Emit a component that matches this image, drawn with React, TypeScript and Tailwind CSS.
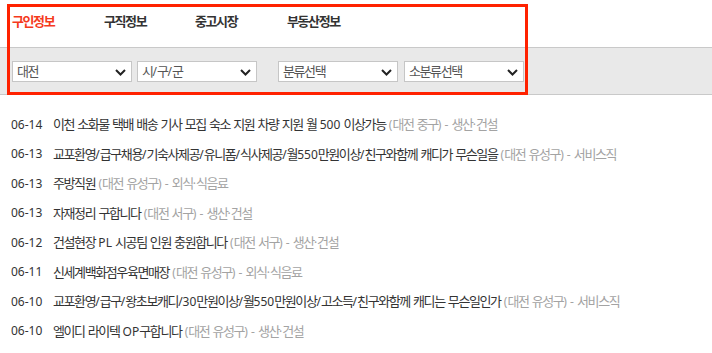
import React from "react";

const navItems = [
  { label: "구인정보", active: true, w: "w-[92px]" },
  { label: "구직정보", active: false, w: "w-[91px]" },
  { label: "중고시장", active: false, w: "w-[92px]" },
  { label: "부동산정보", active: false, w: "w-auto" },
];

const jobs = [
  { date: "06-14", title: "이천 소화물 택배 배송 기사 모집 숙소 지원 차량 지원 월 500 이상가능", area: "대전 중구", cat: "생산·건설" },
  { date: "06-13", title: "교포환영/급구채용/기숙사제공/유니폼/식사제공/월550만원이상/친구와함께 캐디가 무슨일을", area: "대전 유성구", cat: "서비스직" },
  { date: "06-13", title: "주방직원", area: "대전 유성구", cat: "외식·식음료" },
  { date: "06-13", title: "자재정리 구합니다", area: "대전 서구", cat: "생산·건설" },
  { date: "06-12", title: "건설현장 PL 시공팀 인원 충원합니다", area: "대전 서구", cat: "생산·건설" },
  { date: "06-11", title: "신세계백화점우육면매장", area: "대전 유성구", cat: "외식·식음료" },
  { date: "06-10", title: "교포환영/급구/왕초보캐디/30만원이상/월550만원이상/고소득/친구와함께 캐디는 무슨일인가", area: "대전 유성구", cat: "서비스직" },
  { date: "06-10", title: "엘이디 라이텍 OP구합니다", area: "대전 유성구", cat: "생산·건설" },
];

// Hangul runs: slightly larger face with tighter tracking, closer to the original's Korean font
function Tight({ text }: { text: string }) {
  const parts = text.split(/([\uAC00-\uD7A3]+)/);
  return (
    <>
      {parts.map((p, i) =>
        /[\uAC00-\uD7A3]/.test(p) ? (
          <span key={i} className="text-[13px] tracking-[-1.4px]">
            {p}
          </span>
        ) : (
          <span key={i}>{p}</span>
        )
      )}
    </>
  );
}

function Select({ label, className = "" }: { label: string; className?: string }) {
  return (
    <div
      className={`flex h-[21px] w-[120px] items-center justify-between border border-[#c6c6c6] bg-white pl-[4px] pr-[5px] text-[12px] text-[#555] ${className}`}
    >
      <span className="leading-none">
        <Tight text={label} />
      </span>
      <svg width="11" height="7" viewBox="0 0 11 7" className="mt-[1px]">
        <path d="M1 1 L5.5 5.5 L10 1" fill="none" stroke="#222" strokeWidth="2" />
      </svg>
    </div>
  );
}

export default function App() {
  return (
    <div className="relative min-h-[353px] w-[712px] bg-white font-['Noto_Sans','Noto_Sans_CJK_KR',sans-serif] text-[#333]">
      {/* top tabs */}
      <div className="flex h-[47px] items-center pl-[12px] pb-[4px] text-[12px] font-bold leading-none">
        {navItems.map((n) => (
          <div key={n.label} className={`${n.w} ${n.active ? "text-[#f53a1c]" : "text-[#333]"}`}>
            <Tight text={n.label} />
          </div>
        ))}
      </div>

      {/* filter bar */}
      <div className="flex h-[48px] items-center border-y border-[#c9c9c9] bg-[#e9e9e9] pl-[12px] pt-[1px]">
        <Select label="대전" />
        <Select label="시/구/군" className="ml-[5px] w-[119px]" />
        <Select label="분류선택" className="ml-[21px] w-[119px]" />
        <Select label="소분류선택" className="ml-[6px] w-[119px]" />
      </div>

      {/* job list */}
      <ul className="pt-[15px] text-[12px]">
        {jobs.map((j, i) => (
          <li key={i} className="flex h-[29.5px] items-center pl-[11px] whitespace-nowrap leading-none">
            <span className="w-[42px] shrink-0">{j.date}</span>
            <span>
              <Tight text={j.title} />
              <span className="text-[#a3a3a3]">
                {" "}
                <Tight text={`(${j.area}) - ${j.cat}`} />
              </span>
            </span>
          </li>
        ))}
      </ul>

      {/* highlight annotation */}
      <div className="pointer-events-none absolute left-[7px] top-[4px] h-[91px] w-[521px] border-[3px] border-[#ff2200]" />
    </div>
  );
}
